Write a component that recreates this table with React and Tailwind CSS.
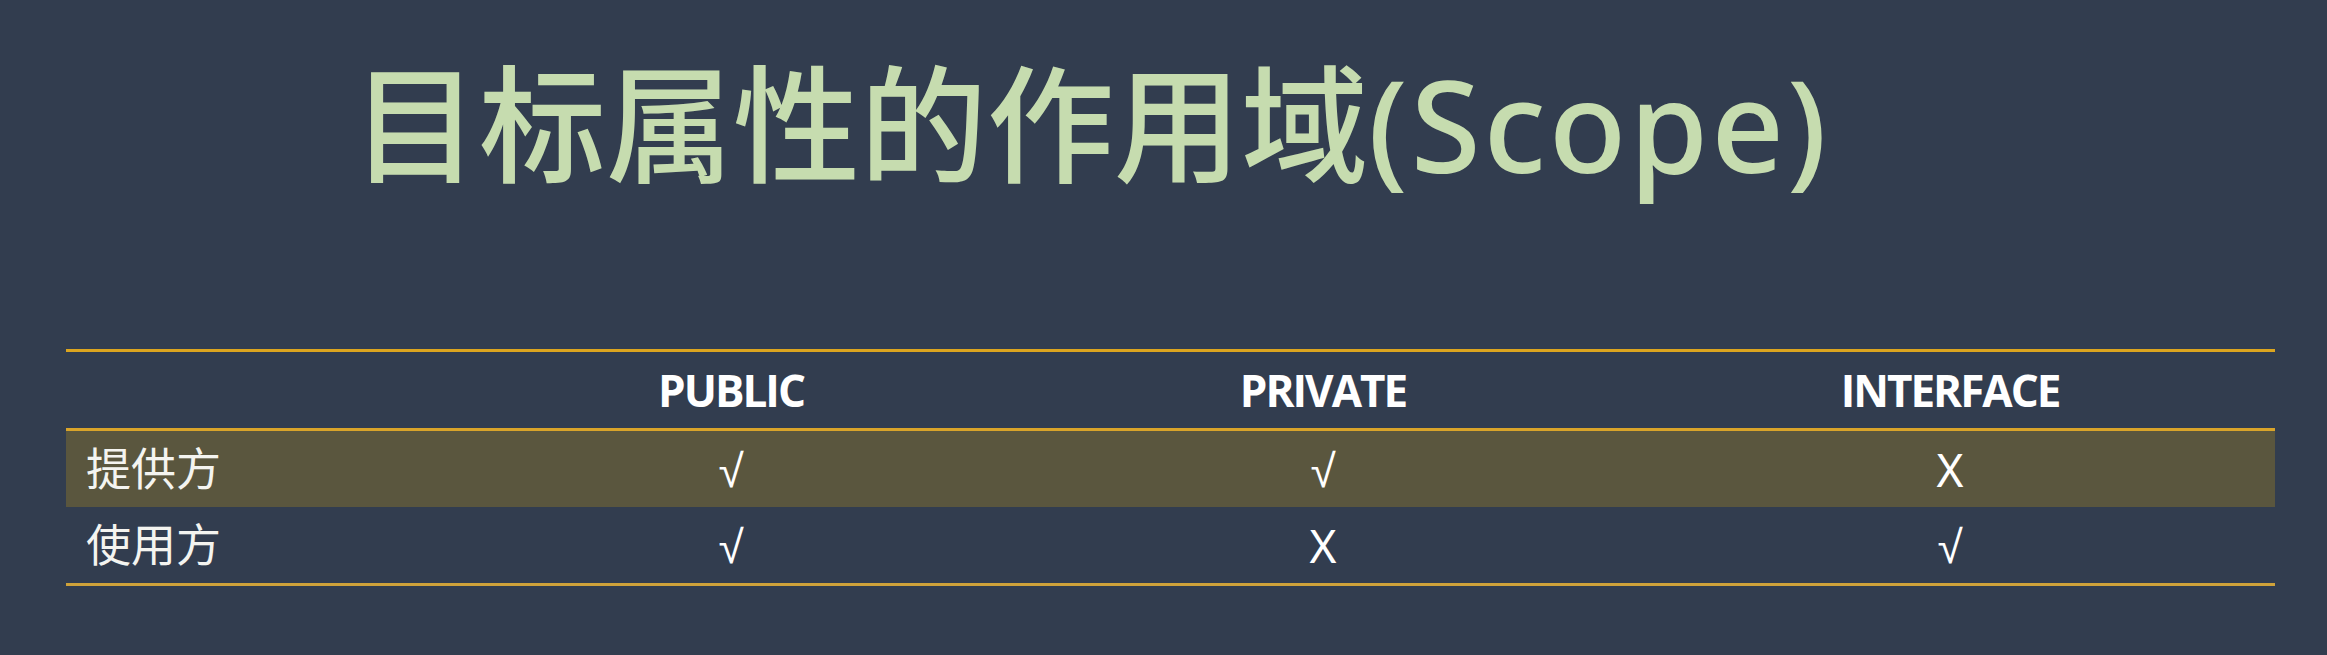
const columns = ['PUBLIC', 'PRIVATE', 'INTERFACE'];

const rows = [
  { label: '提供方', values: ['√', '√', 'X'], highlight: true },
  { label: '使用方', values: ['√', 'X', '√'], highlight: false },
];

const cjk = "font-['Noto_Sans','Noto_Sans_CJK_SC',sans-serif]";

export default function App() {
  return (
    <div className="w-full h-[655px] bg-[#323d4f] overflow-hidden">
      {/* Title */}
      <h1
        className={`pl-[352px] pt-[48px] text-[127px] leading-[152px] font-medium text-[#c6dcaf] whitespace-nowrap ${cjk}`}
      >
        目标属性的作用域<span className="tracking-[3px]">(Scope)</span>
      </h1>

      {/* Scope table */}
      <div className="ml-[66px] mt-[149px] w-[2209px] border-t-[3px] border-b-[3px] border-t-[#dca51f] border-b-[#cfa23a]">
        <div className="grid grid-cols-[375px_580px_604px_650px] h-[79px] border-b-[3px] border-[#d9a42a]">
          <div />
          {columns.map((c) => (
            <div
              key={c}
              className="flex items-center justify-center text-[44px] font-bold text-white font-['Open_Sans',sans-serif] tracking-[-2px]"
            >
              {c}
            </div>
          ))}
        </div>

        {rows.map((r) => (
          <div
            key={r.label}
            className={`grid grid-cols-[375px_580px_604px_650px] h-[76px] ${
              r.highlight ? 'bg-[#5a563e]' : ''
            }`}
          >
            <div className={`flex items-center pl-[20px] text-[45px] text-[#f4f4f0] ${cjk}`}>
              {r.label}
            </div>
            {r.values.map((v, i) => (
              <div
                key={i}
                className="flex items-center justify-center text-[46px] text-white font-['Noto_Sans',sans-serif]"
              >
                {v}
              </div>
            ))}
          </div>
        ))}
      </div>
    </div>
  );
}
